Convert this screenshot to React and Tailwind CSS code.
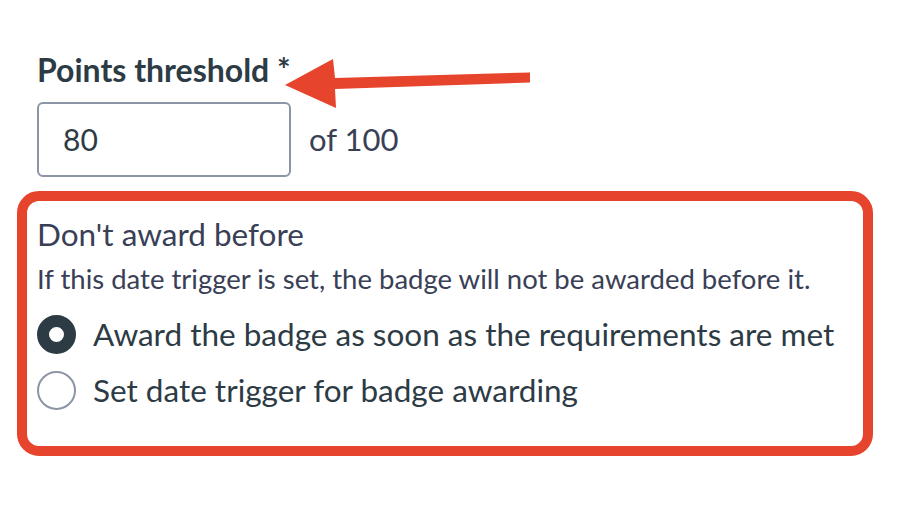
import React, { useState } from "react";

const Radio = ({ checked, label, onSelect }) => (
  <label className="flex items-center gap-[17px] h-[40px] cursor-pointer" onClick={onSelect}>
    <span
      className={`shrink-0 w-[39px] h-[39px] rounded-full bg-white ${
        checked ? "border-[12px] border-[#2d3b45]" : "border-2 border-[#8b95a5]"
      }`}
    />
    <span className="text-[31.5px] leading-[40px] text-[#2d3b45] whitespace-nowrap">{label}</span>
  </label>
);

const App = () => {
  const [mode, setMode] = useState("met");

  return (
    <div className="relative w-[900px] h-[522px] bg-white font-[Lato,sans-serif] overflow-hidden">
      <div className="pl-[37px] pt-[50px]">
        {/* threshold field */}
        <div className="text-[32px] leading-[40px] font-bold text-[#2d3b45]">Points threshold *</div>
        <div className="mt-[12px] flex items-center gap-[18px]">
          <div className="w-[254px] h-[75px] border-2 border-[#8b95a5] rounded-[6px] flex items-center px-[24px] text-[30px] text-[#2d3b45]">
            80
          </div>
          <span className="text-[31px] text-[#394056]">of 100</span>
        </div>

        {/* date trigger */}
        <div className="ml-[-20px] mt-[14px] w-[856px] h-[265px] border-[10px] border-[#e6442c] rounded-[22px] pl-[10px] pt-[15px]">
          <div className="text-[31.5px] leading-[36px] text-[#394056]">Don't award before</div>
          <div className="mt-[11px] text-[27.5px] leading-[32px] text-[#394056] whitespace-nowrap">
            If this date trigger is set, the badge will not be awarded before it.
          </div>
          <div className="mt-[19px] flex flex-col gap-[16px]">
            <Radio
              checked={mode === "met"}
              label="Award the badge as soon as the requirements are met"
              onSelect={() => setMode("met")}
            />
            <Radio
              checked={mode === "date"}
              label="Set date trigger for badge awarding"
              onSelect={() => setMode("date")}
            />
          </div>
        </div>
      </div>

      {/* callout arrow */}
      <svg className="absolute left-0 top-0" width="900" height="522" viewBox="0 0 900 522">
        <polygon points="530,72.5 530,82.5 335,89 336,108 285,85 333,59 335,78" fill="#e6442c" />
      </svg>
    </div>
  );
};

export default App;
